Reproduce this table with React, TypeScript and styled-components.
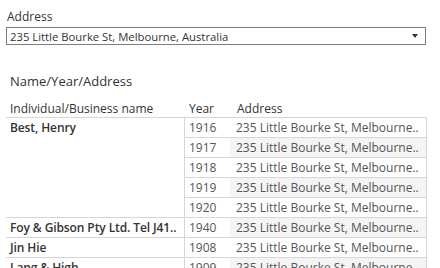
import React from "react";
import styled, { createGlobalStyle } from "styled-components";

const GlobalStyle = createGlobalStyle`
  body {
    margin: 0;
    background: #fff;
    font-family: "Open Sans", "Noto Sans", sans-serif;
    overflow: hidden;
  }
`;

const Page = styled.div`
  width: 440px;
  height: 268px;
  overflow: hidden;
  padding: 8px 14px 0 6px;
  box-sizing: border-box;
`;

const FilterLabel = styled.div`
  font-size: 12px;
  color: #333;
  padding-left: 1px;
  line-height: 18px;
`;

const Select = styled.div`
  margin-top: 1px;
  height: 18px;
  border: 1px solid #7d7d7d;
  box-sizing: border-box;
  display: flex;
  align-items: center;
  justify-content: space-between;
  padding: 0 7px 0 3px;
  font-size: 11.3px;
  color: #333;
`;

const Caret = styled.span`
  width: 0;
  height: 0;
  border-left: 3px solid transparent;
  border-right: 3px solid transparent;
  border-top: 4px solid #333;
`;

const Title = styled.div`
  margin-top: 26px;
  padding-left: 4px;
  font-size: 13px;
  color: #333;
  line-height: 20px;
`;

const Table = styled.div`
  margin-top: 8px;
  width: 421px;
`;

const HeaderRow = styled.div`
  display: flex;
  height: 18px;
  align-items: center;
  border-bottom: 1px solid #d6d6d6;
  font-size: 12px;
  color: #333;
`;

const NameHead = styled.div`
  width: 178px;
  padding-left: 4px;
  box-sizing: border-box;
`;

const YearHead = styled.div`
  width: 46px;
  padding-left: 5px;
  box-sizing: border-box;
`;

const AddrHead = styled.div`
  padding-left: 7px;
`;

const Group = styled.div`
  display: flex;
`;

const NameCell = styled.div`
  width: 178px;
  box-sizing: border-box;
  padding-left: 4px;
  border-bottom: 1px solid #d6d6d6;
  font-size: 12px;
  font-weight: 600;
  letter-spacing: -0.1px;
  color: #333;
  line-height: 19px;
  white-space: nowrap;
`;

const Rows = styled.div`
  border-left: 1px solid #d6d6d6;
  border-right: 1px solid #d6d6d6;
  flex: 1;
`;

const Row = styled.div`
  display: flex;
  height: 20px;
  box-sizing: border-box;
  border-bottom: 1px solid #d6d6d6;
  font-size: 12px;
  color: #555;
  line-height: 19px;
`;

const YearCell = styled.div`
  width: 45px;
  padding-left: 4px;
  box-sizing: border-box;
`;

const AddrCell = styled.div<{ $band: boolean }>`
  flex: 1;
  padding-left: 6px;
  background: ${(p) => (p.$band ? "#f4f4f4" : "#fff")};
  white-space: nowrap;
`;

const ADDR = "235 Little Bourke St, Melbourne..";

const data = [
  { name: "Best, Henry", years: [1916, 1917, 1918, 1919, 1920] },
  { name: "Foy & Gibson Pty Ltd. Tel J41..", years: [1940] },
  { name: "Jin Hie", years: [1908] },
  { name: "Lang & High", years: [1909] },
];

export default function App() {
  let idx = 0;
  return (
    <Page>
      <GlobalStyle />
      <FilterLabel>Address</FilterLabel>
      <Select>
        <span>235 Little Bourke St, Melbourne, Australia</span>
        <Caret />
      </Select>
      <Title>Name/Year/Address</Title>
      <Table>
        <HeaderRow>
          <NameHead>Individual/Business name</NameHead>
          <YearHead>Year</YearHead>
          <AddrHead>Address</AddrHead>
        </HeaderRow>
        {data.map((g) => (
          <Group key={g.name}>
            <NameCell>{g.name}</NameCell>
            <Rows>
              {g.years.map((y) => {
                const band = idx % 2 === 1;
                idx++;
                return (
                  <Row key={y}>
                    <YearCell>{y}</YearCell>
                    <AddrCell $band={band}>{ADDR}</AddrCell>
                  </Row>
                );
              })}
            </Rows>
          </Group>
        ))}
      </Table>
    </Page>
  );
}
